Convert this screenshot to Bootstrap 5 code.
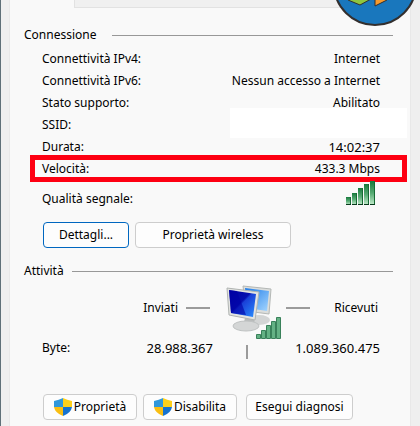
<!DOCTYPE html>
<html lang="it">
<head>
<meta charset="utf-8">
<meta name="viewport" content="width=device-width, initial-scale=1">
<title>Stato di Wi-Fi</title>
<link href="https://cdn.jsdelivr.net/npm/bootstrap@5.3.0/dist/css/bootstrap.min.css" rel="stylesheet">
<style>
body{background:#efefef;color:#000;font-family:"Noto Sans","DejaVu Sans",sans-serif;font-size:12px;line-height:22px}
.dialog{min-height:100vh;border-left:1px solid #5f7078;padding:0 9px 0 8px}
.pane{min-height:100vh;background:#f9f9f9;border:1px solid #e8e8e8;border-width:0 1px;padding:0 17px 6px 14px}
.tab-edge{height:8px;margin:0 -17px 0 50px;background:#f0f0f0;border:1px solid #e2e2e2;border-width:0 0 1px 1px}
.logo{top:0;right:4px;width:84px;height:27px}
.rule{height:1px;background:#989898}
.group-title{font-size:12px;line-height:22px;font-weight:400}
.fields{padding:0 13px 0 18px}
.head{padding:16px 0 2px}
.head-activity{padding:12px 0 2px}
.figures{font-size:13px}
.hidden-name{width:177px;height:30px;margin:-6px -27px -2px 0;background:#fff}
.marked{margin:-3px -27px -2px -12px;padding:0 22px 0 7px;border:5px solid #fe0012;height:27px;line-height:18px}
.signal-row{height:38px}
.push{height:26px;padding:0;font-size:12px;line-height:22px;color:#000;background:#fdfdfd;border:1px solid #cdcdcd;border-radius:4px}
.push:hover{background:#f0f6fb;border-color:#0078d4;color:#000}
.push-default{border-color:#0067c0;width:86px}
.push-wide{width:156px}
.push-shield{width:94px;gap:2px}
.push-plain{width:107px;margin-left:3px}
.dash{width:24px;height:2px;background:#9b9b9b}
.tick{width:2px;height:14px;margin:8px 0 0 33px;background:#9b9b9b}
.push-row{gap:6px;padding-left:19px}
.details{padding-top:4px}
.actions{padding-top:35px}
.traffic{padding:0 15px 0 18px;height:48px;margin-bottom:5px}
.sent{width:171px}
.sent-title{width:136px}
</style>
<script src="https://cdn.jsdelivr.net/npm/bootstrap@5.3.0/dist/js/bootstrap.bundle.min.js" defer></script>
</head>
<body>
<main class="dialog position-relative">
<svg class="logo position-absolute" viewBox="0 0 84 27" aria-hidden="true">
<circle cx="43" cy="-16" r="41" fill="#1977bd" stroke="#332f2e" stroke-width="2"/>
<path d="M16-2V0L28 5 39-1V-4Z" fill="#8ec63f" stroke="#332f2e"/>
<path d="M43-4V6L55 0V-4Z" fill="#f79a2b" stroke="#332f2e"/>
</svg>
<div class="pane">
<div class="tab-edge"></div>
<section>
<div class="head d-flex align-items-center"><h2 class="group-title m-0">Connessione</h2><div class="rule flex-grow-1 ms-3"></div></div>
<div class="fields">
<div class="d-flex justify-content-between"><span>Connettività IPv4:</span><span>Internet</span></div>
<div class="d-flex justify-content-between"><span>Connettività IPv6:</span><span>Nessun accesso a Internet</span></div>
<div class="d-flex justify-content-between"><span>Stato supporto:</span><span>Abilitato</span></div>
<div class="d-flex justify-content-between"><span>SSID:</span><span class="hidden-name"></span></div>
<div class="d-flex justify-content-between"><span>Durata:</span><span class="figures">14:02:37</span></div>
<div class="marked d-flex justify-content-between"><span>Velocità:</span><span>433.3 Mbps</span></div>
<div class="signal-row d-flex justify-content-between align-items-center"><span>Qualità segnale:</span>
<svg class="align-self-start me-1" width="30" height="26" viewBox="0 0 30 26" role="img" aria-label="Segnale eccellente"><defs><linearGradient id="bar" x1="0" y1="0" x2="0" y2="1"><stop offset="0" stop-color="#17793c"/><stop offset=".5" stop-color="#55aa72"/><stop offset="1" stop-color="#c4eccd"/></linearGradient></defs><g fill="url(#bar)"><path d="M0 17h5v8H0z"/><path d="M6 13h5v12H6z"/><path d="M12 8h5v17h-5z"/><path d="M18 4h5v21h-5z"/><path d="M24 1h5v24h-5z"/></g><path d="M4.500 17v8M10.500 13v12M16.500 8v17M22.500 4v21M28.500 1v24" stroke="#176a34"/><path d="M0 24.500h5m1 0h5m1 0h5m1 0h5m1 0h5" stroke="#083a1c"/></svg></div>
</div>
<div class="push-row details d-flex"><button type="button" class="btn push push-default">Dettagli...</button><button type="button" class="btn push push-wide">Proprietà wireless</button></div>
</section>
<section>
<div class="head-activity d-flex align-items-center"><h2 class="group-title m-0">Attività</h2><div class="rule flex-grow-1 ms-2"></div></div>
<div class="traffic d-flex align-items-center">
<span class="sent-title text-end">Inviati</span><span class="dash ms-2"></span>
<svg class="align-self-start flex-shrink-0 ms-3" width="60" height="56" viewBox="0 0 60 56" role="img" aria-label="Attività di rete">
<defs><linearGradient id="scr" x1="0" y1="0" x2="1" y2="1"><stop stop-color="#0000a0"/><stop offset=".45" stop-color="#0610b0"/><stop offset=".5" stop-color="#1a40d8"/><stop offset="1" stop-color="#2a90ff"/></linearGradient>
<linearGradient id="scr2" x1="0" y1="0" x2="1" y2="1"><stop stop-color="#1e7be8"/><stop offset="1" stop-color="#a5d6ff"/></linearGradient></defs>
<ellipse cx="33" cy="36" rx="11" ry="5" fill="#d3d5d5"/>
<path d="M17 2 45 5 43 30 20 27Z" fill="#dcdedc" stroke="#b4b8b6"/><path d="M19 4 43 7 41 27 21 24Z" fill="url(#scr2)"/>
<path d="m19 34 9 1 1 7H17z" fill="#b9bcbc"/><ellipse cx="20" cy="42" rx="13" ry="5" fill="#d4d6d6" stroke="#bfc2c2"/>
<path d="M1 4 33 8 29 36 3 31Z" fill="#e3e4e1" stroke="#b0b4b2"/><path d="M3 6 30 10 27 33 5 29Z" fill="url(#scr)"/><path d="M3 6 11 7 20 31 5 29Z" fill="#0000a5" opacity=".6"/>
<g fill="#64b285" stroke="#39815a"><path d="M30.500 50.500h4v4h-4z"/><path d="M35.500 46.500h4v8h-4z"/><path d="M40.500 41.500h4v13h-4z"/><path d="M45.500 37.500h4v17h-4z"/><path d="M50.500 33.500h4v21h-4z"/></g></svg>
<span class="dash"></span><span class="flex-grow-1 text-end">Ricevuti</span>
</div>
<div class="fields d-flex"><span class="sent d-flex justify-content-between"><span>Byte:</span><span class="figures">28.988.367</span></span><span class="tick"></span><span class="figures ms-auto">1.089.360.475</span></div>
<div class="push-row actions d-flex">
<button type="button" class="btn push push-shield d-flex align-items-center justify-content-center"><svg width="18" height="18" viewBox="0 0 18 18" aria-hidden="true"><path d="M9 0Q5 2 0 3V9H9Z" fill="#3098dc"/><path d="M9 0Q13 2 18 3V9H9Z" fill="#fed01a"/><path d="M0 9Q1 15 9 18V9Z" fill="#f9be13"/><path d="M18 9Q17 15 9 18V9Z" fill="#1673cf"/></svg>Proprietà</button>
<button type="button" class="btn push push-shield d-flex align-items-center justify-content-center"><svg width="18" height="18" viewBox="0 0 18 18" aria-hidden="true"><path d="M9 0Q5 2 0 3V9H9Z" fill="#3098dc"/><path d="M9 0Q13 2 18 3V9H9Z" fill="#fed01a"/><path d="M0 9Q1 15 9 18V9Z" fill="#f9be13"/><path d="M18 9Q17 15 9 18V9Z" fill="#1673cf"/></svg>Disabilita</button>
<button type="button" class="btn push push-plain">Esegui diagnosi</button>
</div>
</section>
</div>
</main>
</body>
</html>
